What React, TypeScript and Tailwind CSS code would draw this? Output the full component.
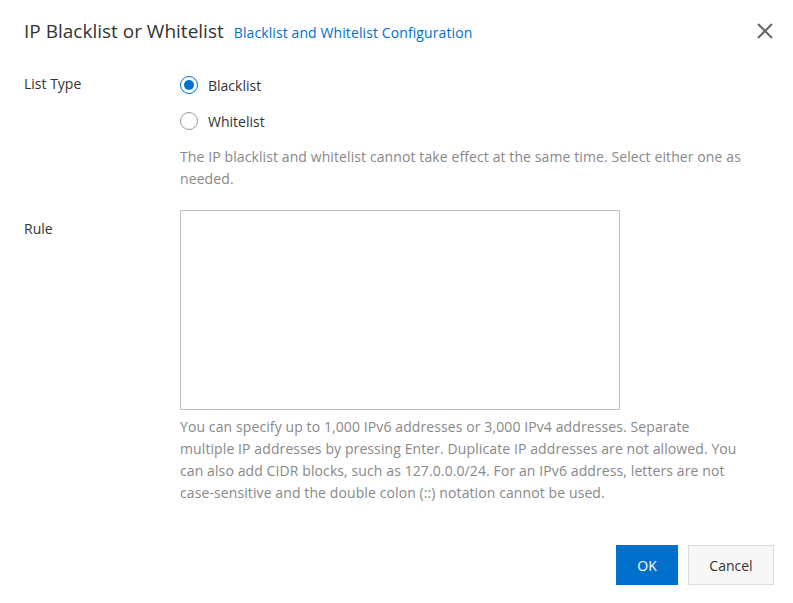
import React, { useState } from "react";

const App = () => {
  const [listType, setListType] = useState("blacklist");
  const [rule, setRule] = useState("");

  const options = [
    { value: "blacklist", label: "Blacklist" },
    { value: "whitelist", label: "Whitelist" },
  ];

  return (
    <div className="w-[793px] h-[603px] bg-white flex flex-col font-['Open_Sans','Noto_Sans',sans-serif] text-[14px] text-[#333]">
      {/* header */}
      <div className="flex items-center justify-between pl-6 pr-5 pt-[16px] h-[45px]">
        <div className="flex items-baseline gap-[10px]">
          <span className="text-[19px] leading-[26px] text-[#333]">
            IP Blacklist or Whitelist
          </span>
          <a href="#" className="text-[14px] tracking-[0.1px] text-[#0070cc]">
            Blacklist and Whitelist Configuration
          </a>
        </div>
        <button type="button" className="w-4 h-4 flex items-center justify-center">
          <svg width="16" height="16" viewBox="0 0 16 16">
            <path d="M1 1 L15 15 M15 1 L1 15" stroke="#666" strokeWidth="2" fill="none" />
          </svg>
        </button>
      </div>

      {/* form */}
      <div className="flex flex-col pl-6 pr-5 mt-[22px]">
        <div className="flex">
          <div className="w-[156px] pt-[6px] leading-[22px]">List Type</div>
          <div className="flex flex-col">
            {options.map((opt) => (
              <label
                key={opt.value}
                className="flex items-center h-9 cursor-pointer"
                onClick={() => setListType(opt.value)}
              >
                {listType === opt.value ? (
                  <span className="w-[18px] h-[18px] rounded-full border-[1.5px] border-[#0070cc] flex items-center justify-center">
                    <span className="w-[10px] h-[10px] rounded-full bg-[#0070cc]" />
                  </span>
                ) : (
                  <span className="w-[18px] h-[18px] rounded-full border border-[#999]" />
                )}
                <span className="ml-[10px] text-[#333]">{opt.label}</span>
              </label>
            ))}
            <p className="mt-[7px] whitespace-nowrap leading-[22px] tracking-[0.1px] text-[#888]">
              The IP blacklist and whitelist cannot take effect at the same time. Select either one as
              <br />
              needed.
            </p>
          </div>
        </div>

        <div className="flex mt-5">
          <div className="w-[156px] pt-2 leading-[22px]">Rule</div>
          <div className="flex flex-col">
            <textarea
              value={rule}
              onChange={(e) => setRule(e.target.value)}
              className="w-[440px] h-[200px] border border-[#bfbfbf] resize-none outline-none p-2"
            />
            <p className="mt-[6px] whitespace-nowrap leading-[22px] tracking-[0.1px] text-[#888]">
              You can specify up to 1,000 IPv6 addresses or 3,000 IPv4 addresses. Separate
              <br />
              multiple IP addresses by pressing Enter. Duplicate IP addresses are not allowed. You
              <br />
              can also add CIDR blocks, such as 127.0.0.0/24. For an IPv6 address, letters are not
              <br />
              case-sensitive and the double colon (::) notation cannot be used.
            </p>
          </div>
        </div>
      </div>

      {/* footer */}
      <div className="mt-auto flex justify-end gap-[10px] pr-[19px] pb-[18px]">
        <button type="button" className="w-[62px] h-10 bg-[#0070cc] text-white">
          OK
        </button>
        <button
          type="button"
          className="w-[86px] h-10 bg-[#f7f7f7] border border-[#ddd] text-[#333]"
        >
          Cancel
        </button>
      </div>
    </div>
  );
};

export default App;
